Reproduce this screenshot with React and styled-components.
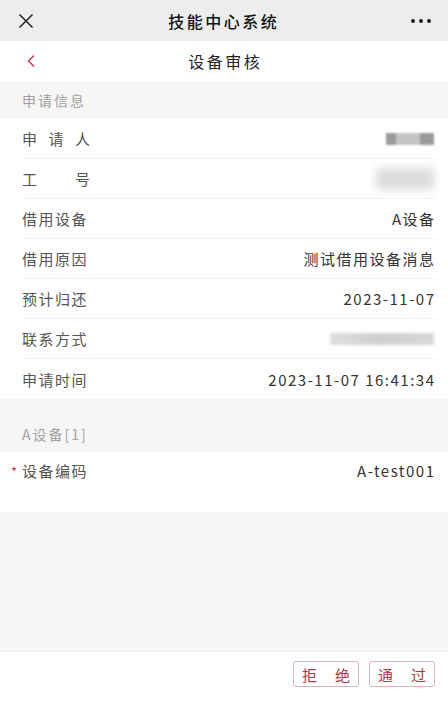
import styled, { createGlobalStyle } from "styled-components";

const GlobalStyle = createGlobalStyle`
  html, body {
    margin: 0;
    padding: 0;
    background: #f6f6f6;
    font-family: "Noto Sans CJK SC", "Noto Sans", sans-serif;
  }
  * { box-sizing: border-box; }
`;

const Page = styled.div`
  width: 448px;
  height: 705px;
  display: flex;
  flex-direction: column;
  background: #f6f6f6;
`;

const TopBar = styled.div`
  height: 41px;
  background: #ededed;
  display: flex;
  align-items: center;
  justify-content: space-between;
  padding: 0 14px 0 15px;
`;

const TopTitle = styled.div`
  font-size: 16px;
  font-weight: 500;
  color: #111;
  letter-spacing: 2.5px;
  margin-right: -2.5px;
`;

const IconSlot = styled.div`
  width: ${(p) => p.$w || 22}px;
  height: 22px;
  display: flex;
  align-items: center;
  justify-content: center;
`;

const NavBar = styled.div`
  height: 40px;
  background: #fff;
  display: flex;
  align-items: center;
  justify-content: space-between;
  padding: 0 20px;
`;

const NavTitle = styled.div`
  font-size: 16px;
  color: #222;
  letter-spacing: 2.5px;
  margin-right: -2.5px;
`;

const SectionHead = styled.div`
  height: ${(p) => p.$h}px;
  padding: 0 22px;
  display: flex;
  align-items: ${(p) => (p.$bottom ? "flex-end" : "center")};
  padding-bottom: ${(p) => (p.$bottom ? "8px" : "0")};
  font-size: 14px;
  color: #a0a0a0;
  letter-spacing: 2px;
`;

const List = styled.div`
  background: #fff;
  padding: 0 12px 0 22px;
`;

const Row = styled.div`
  height: ${(p) => p.$h || 40}px;
  display: flex;
  align-items: ${(p) => (p.$top ? "flex-start" : "center")};
  padding-top: ${(p) => (p.$top ? "8px" : "0")};
  justify-content: space-between;
  border-bottom: ${(p) => (p.$last ? "none" : "1px solid #f2f2f2")};
  position: relative;
`;

const Label = styled.div`
  font-size: 15px;
  color: #555;
  width: 68px;
  text-align: left;
  text-align-last: ${(p) => (p.$justify ? "justify" : "auto")};
  letter-spacing: ${(p) => (p.$justify ? 0 : 1.5)}px;
`;

const Value = styled.div`
  font-size: 15px;
  color: #333;
  letter-spacing: 1.5px;
  margin-right: 0.5px;
`;

const Star = styled.span`
  position: absolute;
  left: -11px;
  top: 10px;
  color: #d9344a;
  font-size: 13px;
`;

const Blur = styled.div`
  width: ${(p) => p.$w}px;
  height: ${(p) => p.$h}px;
  background: ${(p) => p.$bg};
  filter: blur(${(p) => p.$blur}px);
  margin-right: 2px;
`;

const Filler = styled.div`
  flex: 1;
`;

const Footer = styled.div`
  height: 54px;
  background: #fff;
  border-top: 1px solid #ececec;
  display: flex;
  justify-content: flex-end;
  align-items: flex-start;
  gap: 10px;
  padding: 9px 13px 0 0;
`;

const ActionButton = styled.button`
  width: 66px;
  height: 26px;
  border: 1px solid #dcb4bb;
  border-radius: 3px;
  background: #fff;
  color: #b0354a;
  font-family: inherit;
  font-size: 15px;
  padding: 0 8px;
  display: flex;
  align-items: center;
  justify-content: space-between;
  white-space: nowrap;
`;

const CloseIcon = () => (
  <svg width="16" height="16" viewBox="0 0 16 16">
    <path d="M1.5 1.5 L14.5 14.5 M14.5 1.5 L1.5 14.5" stroke="#222" strokeWidth="1.5" />
  </svg>
);

const MoreIcon = () => (
  <svg width="22" height="6" viewBox="0 0 22 6">
    <circle cx="3" cy="3" r="2" fill="#222" />
    <circle cx="11" cy="3" r="2" fill="#222" />
    <circle cx="19" cy="3" r="2" fill="#222" />
  </svg>
);

const BackIcon = () => (
  <svg width="10" height="14" viewBox="0 0 10 14">
    <path d="M8 1.5 L2.5 7 L8 12.5" stroke="#d9344a" strokeWidth="1.4" fill="none" />
  </svg>
);

const rows = [
  { label: "申请人", justify: true, value: <Blur $w={48} $h={12} $bg="linear-gradient(90deg,#9a9a9a 0 20%,#c4c4c4 20% 70%,#9a9a9a 70%)" $blur={0.8} /> },
  { label: "工号", justify: true, value: <Blur $w={58} $h={22} $bg="#dcdcdc" $blur={4} /> },
  { label: "借用设备", value: "A设备" },
  { label: "借用原因", value: "测试借用设备消息" },
  { label: "预计归还", value: "2023-11-07" },
  { label: "联系方式", value: <Blur $w={104} $h={12} $bg="linear-gradient(90deg,#dedede,#cfcfcf 50%,#d8d8d8)" $blur={1.5} /> },
  { label: "申请时间", value: "2023-11-07 16:41:34" },
];

const App = () => {
  return (
    <Page>
      <GlobalStyle />
      <TopBar>
        <IconSlot><CloseIcon /></IconSlot>
        <TopTitle>技能中心系统</TopTitle>
        <IconSlot $w={26}><MoreIcon /></IconSlot>
      </TopBar>
      <NavBar>
        <IconSlot><BackIcon /></IconSlot>
        <NavTitle>设备审核</NavTitle>
        <IconSlot />
      </NavBar>
      <SectionHead $h={38}>申请信息</SectionHead>
      <List>
        {rows.map((r, i) => (
          <Row key={r.label} $last={i === rows.length - 1}>
            <Label $justify={r.justify}>{r.label}</Label>
            <Value>{r.value}</Value>
          </Row>
        ))}
      </List>
      <SectionHead $h={53} $bottom>A设备[1]</SectionHead>
      <List>
        <Row $h={60} $top $last>
          <Star>*</Star>
          <Label>设备编码</Label>
          <Value>A-test001</Value>
        </Row>
      </List>
      <Filler />
      <Footer>
        <ActionButton><span>拒</span><span>绝</span></ActionButton>
        <ActionButton><span>通</span><span>过</span></ActionButton>
      </Footer>
    </Page>
  );
};

export default App;
